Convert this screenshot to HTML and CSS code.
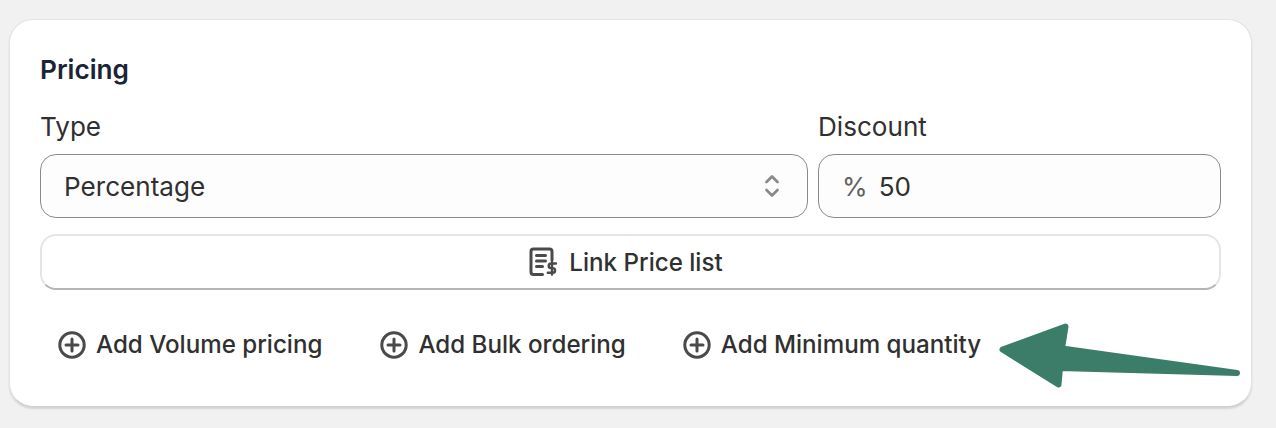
FILE: index.html
```html
<!DOCTYPE html>
<html lang="en">
<head>
    <meta charset="UTF-8">
    <meta name="viewport" content="width=device-width, initial-scale=1.0">
    <title>Pricing</title>
    <link rel="stylesheet" href="styles.css">
</head>
<body>
    <div class="card">
        <h2 class="card-title">Pricing</h2>

        <div class="fields">
            <div class="field">
                <label class="field-label">Type</label>
                <div class="input input-select">
                    <span>Percentage</span>
                    <svg class="select-icon" width="20" height="30" viewBox="0 0 20 30" fill="none" stroke="#8a8a8a" stroke-width="2.800" stroke-linecap="round" stroke-linejoin="round">
                        <path d="M4.500 11 10 5.500 15.500 11"/>
                        <path d="M4.500 19 10 24.500 15.500 19"/>
                    </svg>
                </div>
            </div>
            <div class="field field-discount">
                <label class="field-label">Discount</label>
                <div class="input">
                    <span class="prefix">%</span>
                    <span>50</span>
                </div>
            </div>
        </div>

        <button class="link-button">
            <svg width="30" height="30" viewBox="1.500 0 30 30" fill="none" stroke="#4a4a4a" stroke-width="3" stroke-linecap="round" stroke-linejoin="round">
                <path d="M15 27.500H6a2.500 2.500 0 0 1-2.500-2.500V4.500A2.500 2.500 0 0 1 6 2h16a2.500 2.500 0 0 1 2.500 2.500V13"/>
                <path d="M9 8.500h9M9 14h9M9 19.500h6"/>
                <path d="M28.500 16.500h-5a2.100 2.100 0 0 0 0 4.600h1.800a2.100 2.100 0 0 1 0 4.600h-5M24.500 15v12.500" stroke-width="2.400"/>
            </svg>
            <span>Link Price list</span>
        </button>

        <div class="actions">
            <button class="action action-volume">
                <svg width="28" height="28" viewBox="0 0 28 28" fill="none" stroke="#4a4a4a" stroke-width="3" stroke-linecap="round">
                    <circle cx="14" cy="14" r="12.200"/>
                    <path d="M14 8v12M8 14h12"/>
                </svg>
                <span>Add Volume pricing</span>
            </button>
            <button class="action action-bulk">
                <svg width="28" height="28" viewBox="0 0 28 28" fill="none" stroke="#4a4a4a" stroke-width="3" stroke-linecap="round">
                    <circle cx="14" cy="14" r="12.200"/>
                    <path d="M14 8v12M8 14h12"/>
                </svg>
                <span>Add Bulk ordering</span>
            </button>
            <button class="action">
                <svg width="28" height="28" viewBox="0 0 28 28" fill="none" stroke="#4a4a4a" stroke-width="3" stroke-linecap="round">
                    <circle cx="14" cy="14" r="12.200"/>
                    <path d="M14 8v12M8 14h12"/>
                </svg>
                <span>Add Minimum quantity</span>
            </button>
        </div>

        <svg class="arrow" width="250" height="74" viewBox="0 0 250 74" fill="#3b7d69" stroke="#3b7d69" stroke-width="6" stroke-linejoin="round">
            <path d="M4.500 28.500 67.500 5.500 64 27.500 239 52 62 47 60.500 63.500Z"/>
        </svg>
    </div>
</body>
</html>
```

FILE: styles.css
```css
* {
    box-sizing: border-box;
}

body {
    font-family: Inter, "Liberation Sans", sans-serif;
    margin: 0;
    padding: 19px 24px 21px 9px;
    background-color: #f1f1f1;
    color: #303030;
}

.card {
    position: relative;
    height: 388px;
    padding: 32px 30px 0 30px;
    background-color: #fff;
    border: 1px solid #e3e3e3;
    border-bottom-color: #cfcfcf;
    border-radius: 24px;
    box-shadow: 0 2px 2px rgba(0, 0, 0, 0.12);
}

.card-title {
    margin: 0;
    font-size: 26.200px;
    line-height: 36px;
    font-weight: 600;
    color: #1a2436;
}

.fields {
    display: flex;
    gap: 10px;
    margin-top: 18px;
}

.field {
    flex: 1;
}

.field-discount {
    flex: 0 0 403px;
}

.field-label {
    display: block;
    font-size: 26.100px;
    line-height: 36px;
    margin-top: 3px;
    margin-bottom: 9px;
}

.input {
    display: flex;
    align-items: center;
    gap: 11px;
    height: 64px;
    padding: 0 23px;
    font-size: 26.100px;
    background-color: #fdfdfd;
    border: 1px solid #8a8a8a;
    border-radius: 16px;
}

.input-select {
    justify-content: space-between;
    padding-right: 25px;
}

.prefix {
    color: #616161;
}

.select-icon {
    flex-shrink: 0;
}

.link-button {
    display: flex;
    align-items: center;
    justify-content: center;
    gap: 10px;
    width: 100%;
    height: 56px;
    margin-top: 16px;
    padding: 0 9px 0 0;
    font-family: inherit;
    font-size: 24.150px;
    font-weight: 550;
    color: #303030;
    background-color: #fff;
    border: 2px solid #e5e5e5;
    border-bottom-color: #b5b5b5;
    border-radius: 16px;
}

.actions {
    display: flex;
    margin-top: 40px;
    padding-left: 18px;
}

.action {
    display: flex;
    align-items: center;
    gap: 10px;
    padding: 0;
    font-family: inherit;
    font-size: 24.150px;
    font-weight: 550;
    color: #303030;
    background: none;
    border: none;
}

.action-volume {
    margin-right: 58px;
}

.action-bulk {
    margin-right: 57px;
}

/* callout drawn on top of the card */
.arrow {
    position: absolute;
    left: 988px;
    top: 301px;
}
```
